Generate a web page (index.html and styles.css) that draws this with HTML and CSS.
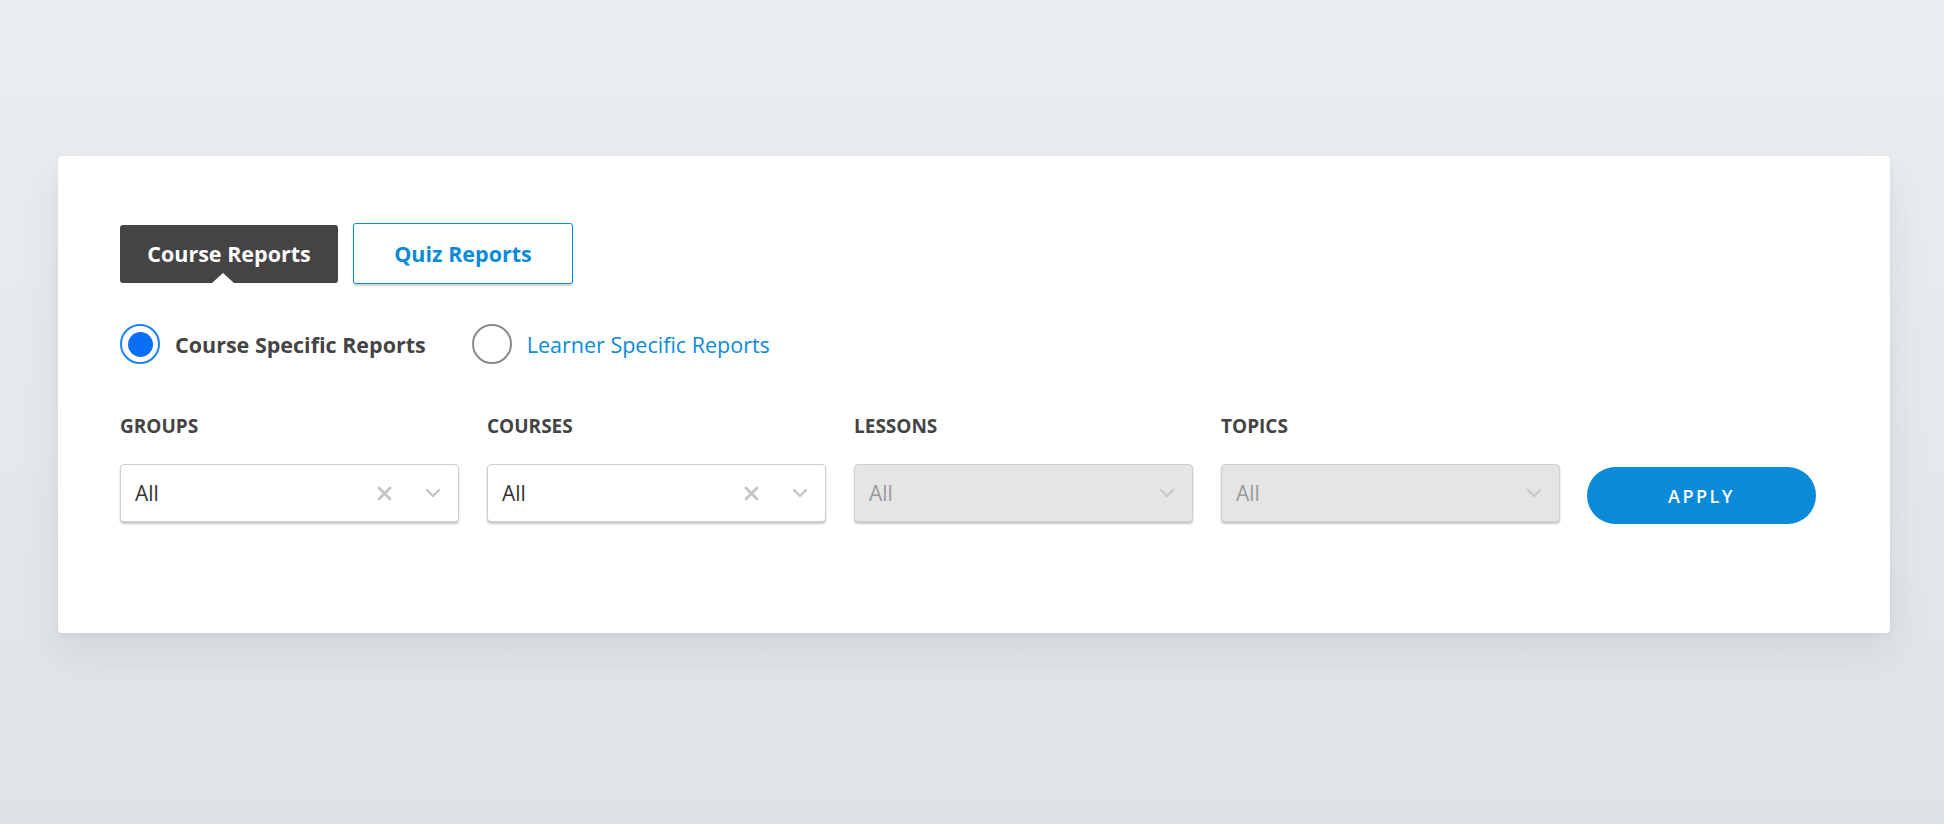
FILE: index.html
```html
<!DOCTYPE html>
<html lang="en">
<head>
<meta charset="utf-8">
<title>Reports</title>
<link rel="stylesheet" href="styles.css">
</head>
<body>
<div class="page">
  <div class="card">
    <div class="tabs">
      <div class="tab tab-active">Course Reports</div>
      <div class="tab tab-outline">Quiz Reports</div>
    </div>
    <div class="radios">
      <label class="radio radio-on"><span class="circle"><span class="dot"></span></span><span class="radio-text">Course Specific Reports</span></label>
      <label class="radio radio-off"><span class="circle"></span><span class="radio-text">Learner Specific Reports</span></label>
    </div>
    <div class="filters">
      <div class="field">
        <div class="field-label">GROUPS</div>
        <div class="select">
          <span class="value">All</span>
          <svg class="ico-x" width="15" height="15" viewBox="0 0 15 15"><path d="M2 2L13 13M13 2L2 13" stroke="#c4c4c4" stroke-width="2.8" stroke-linecap="round"/></svg>
          <svg class="ico-chev" width="16" height="10" viewBox="0 0 16 10"><path d="M2 2L8 8L14 2" fill="none" stroke="#c4c4c4" stroke-width="2.4" stroke-linecap="round" stroke-linejoin="round"/></svg>
        </div>
      </div>
      <div class="field">
        <div class="field-label">COURSES</div>
        <div class="select">
          <span class="value">All</span>
          <svg class="ico-x" width="15" height="15" viewBox="0 0 15 15"><path d="M2 2L13 13M13 2L2 13" stroke="#c4c4c4" stroke-width="2.8" stroke-linecap="round"/></svg>
          <svg class="ico-chev" width="16" height="10" viewBox="0 0 16 10"><path d="M2 2L8 8L14 2" fill="none" stroke="#c4c4c4" stroke-width="2.4" stroke-linecap="round" stroke-linejoin="round"/></svg>
        </div>
      </div>
      <div class="field">
        <div class="field-label">LESSONS</div>
        <div class="select select-disabled">
          <span class="value">All</span>
          <svg class="ico-chev" width="16" height="10" viewBox="0 0 16 10"><path d="M2 2L8 8L14 2" fill="none" stroke="#c9c9c9" stroke-width="2.4" stroke-linecap="round" stroke-linejoin="round"/></svg>
        </div>
      </div>
      <div class="field">
        <div class="field-label">TOPICS</div>
        <div class="select select-disabled">
          <span class="value">All</span>
          <svg class="ico-chev" width="16" height="10" viewBox="0 0 16 10"><path d="M2 2L8 8L14 2" fill="none" stroke="#c9c9c9" stroke-width="2.4" stroke-linecap="round" stroke-linejoin="round"/></svg>
        </div>
      </div>
      <button class="apply">APPLY</button>
    </div>
  </div>
</div>
</body>
</html>
```
FILE: styles.css
```css
html, body {
  margin: 0;
  padding: 0;
}
body {
  width: 1944px;
  height: 824px;
  background: linear-gradient(180deg, #ebeef1 0%, #e6e9ec 50%, #dfe3e6 100%);
  font-family: "Open Sans", "Liberation Sans", sans-serif;
  overflow: hidden;
}
.page {
  padding: 156px 54px 0 58px;
}
.card {
  width: 1832px;
  height: 477px;
  box-sizing: border-box;
  background: #fff;
  border-radius: 4px;
  box-shadow: 0 20px 40px rgba(60, 70, 80, 0.10), 0 2px 6px rgba(60, 70, 80, 0.06);
  padding: 67px 62px 0 62px;
}
.tabs {
  display: flex;
  align-items: center;
  gap: 15px;
  height: 61px;
}
.tab {
  box-sizing: border-box;
  display: flex;
  align-items: center;
  justify-content: center;
  font-size: 21.5px;
  font-weight: 700;
  border-radius: 3px;
}
.tab-active {
  position: relative;
  width: 218px;
  height: 58px;
  background: #444444;
  color: #fff;
}
.tab-active::after {
  content: "";
  position: absolute;
  left: 92px;
  bottom: 0;
  width: 0;
  height: 0;
  border-left: 11px solid transparent;
  border-right: 11px solid transparent;
  border-bottom: 10px solid #fff;
}
.tab-outline {
  width: 220px;
  height: 61px;
  border: 1px solid #0a8bd9;
  background: #fff;
  color: #0a8bd9;
  box-shadow: 0 2px 2px rgba(0, 0, 0, 0.18);
}
.radios {
  display: flex;
  align-items: center;
  margin-top: 39px;
  height: 42px;
}
.radio {
  display: flex;
  align-items: center;
  gap: 15px;
}
.radio-off {
  margin-left: 46px;
}
.circle {
  box-sizing: border-box;
  width: 40px;
  height: 40px;
  border-radius: 50%;
  display: flex;
  align-items: center;
  justify-content: center;
}
.radio-on .circle {
  border: 2px solid #1a84ff;
}
.radio-off .circle {
  border: 2px solid #8a8a8a;
}
.dot {
  width: 25px;
  height: 25px;
  border-radius: 50%;
  background: #0b6ff5;
}
.radio-text {
  font-size: 21.5px;
}
.radio-on .radio-text {
  font-weight: 700;
  color: #444;
}
.radio-off .radio-text {
  color: #0a8bd9;
}
.filters {
  display: flex;
  align-items: flex-end;
  gap: 28px;
  margin-top: 50px;
}
.field {
  display: flex;
  flex-direction: column;
  gap: 27px;
}
.field-label {
  font-size: 19px;
  font-weight: 700;
  color: #444;
  line-height: 22px;
}
.select {
  box-sizing: border-box;
  width: 339px;
  height: 58px;
  border: 1px solid #cfcfcf;
  border-radius: 4px;
  background: #fff;
  box-shadow: 0 2px 2px rgba(0, 0, 0, 0.22);
  display: flex;
  align-items: center;
  padding: 0 17px 0 14px;
}
.value {
  flex: 1;
  font-size: 21px;
  color: #333;
}
.select-disabled {
  background: #e5e5e5;
}
.select-disabled .value {
  color: #9a9a9a;
}
.ico-x {
  margin-right: 33px;
}
.apply {
  width: 229px;
  height: 57px;
  margin-left: -1px;
  margin-bottom: -2px;
  border: none;
  border-radius: 29px;
  background: #0a8bd9;
  color: #fff;
  font-family: "Open Sans", "Liberation Sans", sans-serif;
  font-size: 18px;
  font-weight: 600;
  letter-spacing: 2.5px;
}
```
